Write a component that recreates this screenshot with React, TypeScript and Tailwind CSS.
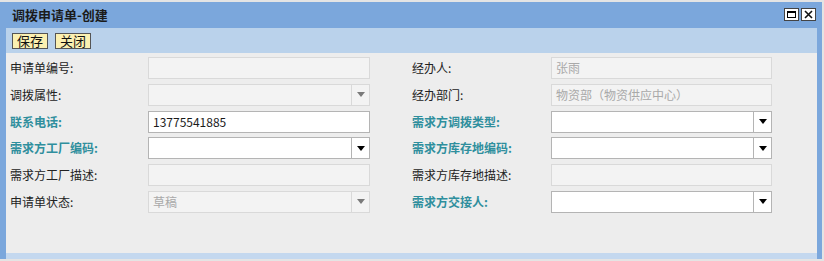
import React from 'react';

// one field of the form: label + control
interface Field {
  label: string;
  required?: boolean;
  kind: 'input' | 'select';
  value?: string;
  disabled?: boolean;
}

const leftFields: Field[] = [
  { label: '申请单编号:', kind: 'input', disabled: true },
  { label: '调拨属性:', kind: 'select', disabled: true },
  { label: '联系电话:', kind: 'input', required: true, value: '13775541885' },
  { label: '需求方工厂编码:', kind: 'select', required: true },
  { label: '需求方工厂描述:', kind: 'input', disabled: true },
  { label: '申请单状态:', kind: 'select', disabled: true, value: '草稿' },
];

const rightFields: Field[] = [
  { label: '经办人:', kind: 'input', disabled: true, value: '张雨' },
  { label: '经办部门:', kind: 'input', disabled: true, value: '物资部（物资供应中心）' },
  { label: '需求方调拨类型:', kind: 'select', required: true },
  { label: '需求方库存地编码:', kind: 'select', required: true },
  { label: '需求方库存地描述:', kind: 'input', disabled: true },
  { label: '需求方交接人:', kind: 'select', required: true },
];

const font = { fontFamily: '"Noto Sans CJK SC", "Liberation Sans", sans-serif' };

function Control({ f, width }: { f: Field; width: string }) {
  const box = f.disabled
    ? 'bg-[#f3f3f3] border-[#d9d9d9] text-[#a9a9a9]'
    : 'bg-white border-[#b4b4b4] text-[#1a1a1a]';
  return (
    <div className={`flex h-[22px] border ${box} ${width}`}>
      <div className="flex-1 pl-[4px] text-[12px] leading-[20px] whitespace-nowrap overflow-hidden">
        {f.value}
      </div>
      {f.kind === 'select' && (
        <div
          className={`w-[18px] flex items-center justify-center border-l ${
            f.disabled ? 'border-[#d9d9d9]' : 'border-[#b4b4b4]'
          }`}
        >
          <div
            className={`w-0 h-0 border-l-[4px] border-r-[4px] border-t-[5px] border-l-transparent border-r-transparent ${
              f.disabled ? 'border-t-[#7a7a7a]' : 'border-t-black'
            }`}
          />
        </div>
      )}
    </div>
  );
}

function Label({ f, width }: { f: Field; width: string }) {
  return (
    <div
      className={`${width} text-[12px] leading-[22px] whitespace-nowrap ${
        f.required ? 'text-[#2f8f9d] font-bold' : 'text-[#222]'
      }`}
    >
      {f.label}
    </div>
  );
}

export default function App() {
  return (
    <div className="w-[824px] h-[261px] bg-[#e4e4e4] pt-[2px] overflow-hidden" style={font}>
      <div className="w-[822px] h-[257px] bg-[#7ba7dc] flex flex-col">
        {/* — title bar */}
        <div className="h-[26px] flex items-center justify-between pl-[12px] pr-[6px]">
          <div className="text-[13px] font-bold text-[#1b1b1b]">调拨申请单-创建</div>
          <div className="flex gap-[2px] -mt-[2px]">
            <div className="w-[15px] h-[13px] bg-white border border-[#444] flex items-center justify-center">
              <div className="w-[9px] h-[7px] border border-black border-t-[2px]" />
            </div>
            <div className="w-[15px] h-[13px] bg-white border border-[#444] flex items-center justify-center">
              <svg width="9" height="9" viewBox="0 0 9 9">
                <path d="M1 1 L8 8 M8 1 L1 8" stroke="#111" strokeWidth="1.6" />
              </svg>
            </div>
          </div>
        </div>

        <div className="flex-1 flex flex-col ml-[6px] mr-[5px]">
          {/* — toolbar */}
          <div className="h-[25px] bg-[#bad2eb] flex items-center gap-[7px] pl-[6px]">
            {['保存', '关闭'].map(t => (
              <div
                key={t}
                className="h-[16px] w-[36px] bg-[#fbf0b1] border border-[#555] text-[13px] leading-[14px] text-center text-[#111]"
              >
                {t}
              </div>
            ))}
          </div>

          {/* — form */}
          <div className="flex-1 bg-[#ededed] pt-[4px] pl-[4px] flex gap-[42px]">
            <div className="flex flex-col gap-[4.8px]">
              {leftFields.map(f => (
                <div key={f.label} className="flex">
                  <Label f={f} width="w-[138px]" />
                  <Control f={f} width="w-[222px]" />
                </div>
              ))}
            </div>
            <div className="flex flex-col gap-[4.8px]">
              {rightFields.map(f => (
                <div key={f.label} className="flex">
                  <Label f={f} width="w-[139px]" />
                  <Control f={f} width="w-[221px]" />
                </div>
              ))}
            </div>
          </div>

          {/* — bottom band */}
          <div className="h-[6px] bg-[#c4d8ef]" />
        </div>
      </div>
    </div>
  );
}
